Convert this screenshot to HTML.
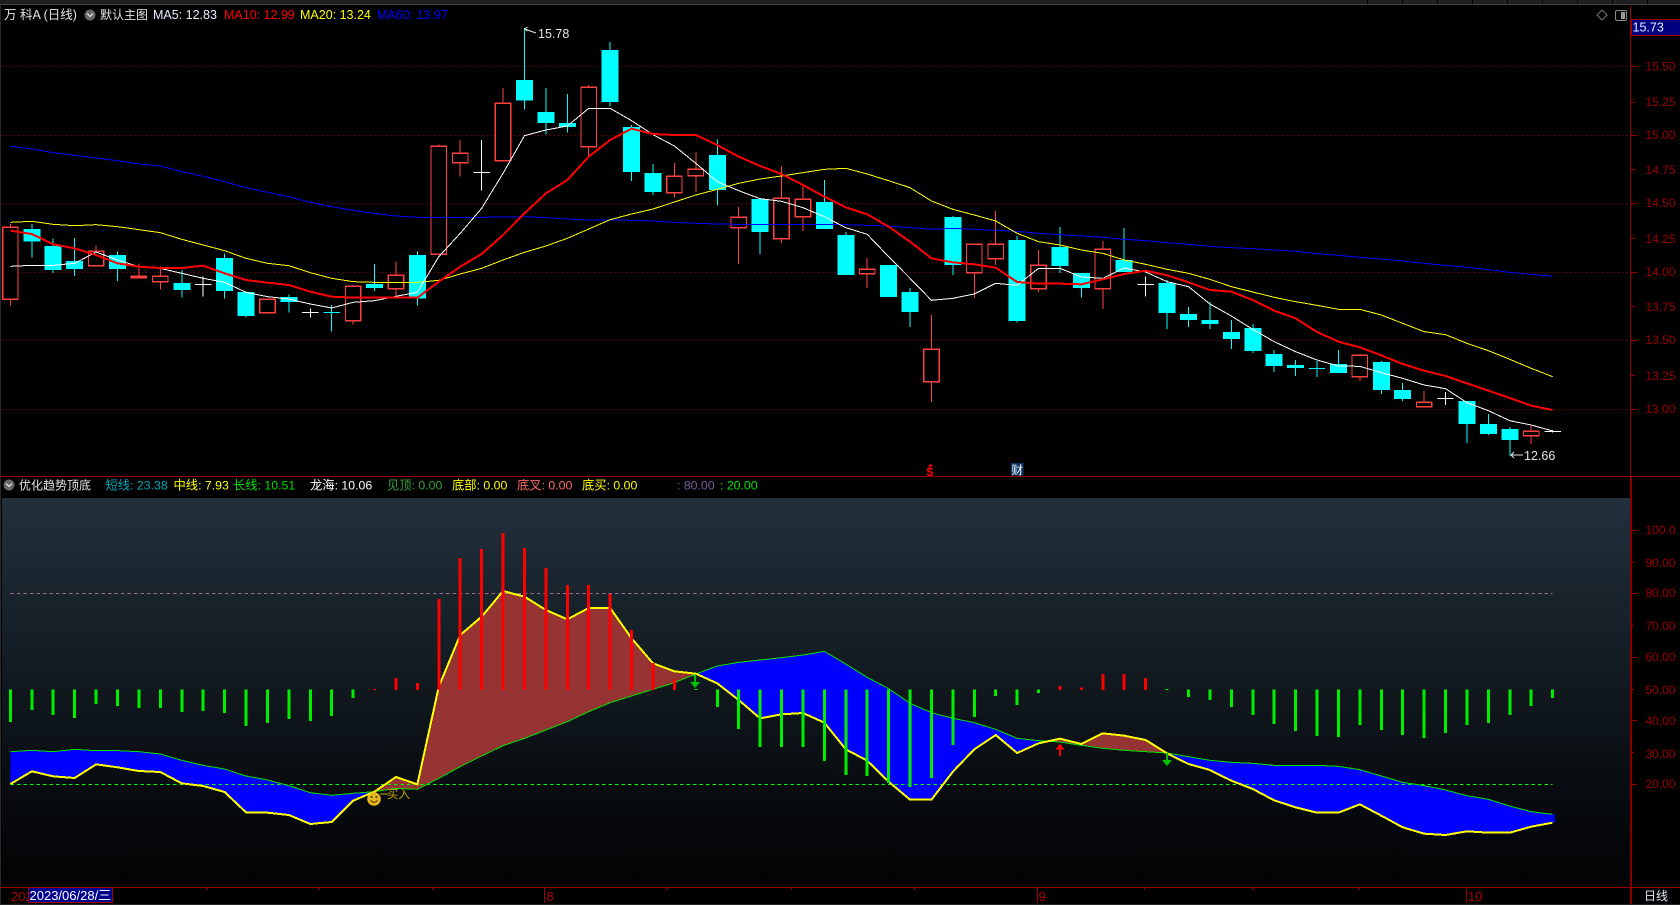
<!DOCTYPE html>
<html lang="zh">
<head>
<meta charset="utf-8">
<title>万科A 日线</title>
<style>
html,body{margin:0;padding:0;background:#000;width:1680px;height:905px;overflow:hidden}
svg{display:block;position:absolute;left:0;top:0}
text{font-family:"Liberation Sans","Noto Sans CJK SC",sans-serif;font-size:12.3px;white-space:pre}
.n{vector-effect:non-scaling-stroke;fill:none}
.ax text{fill:#9c0000;font-size:12px}
</style>
</head>
<body>
<svg width="1680" height="905" viewBox="0 0 1680 905" xmlns="http://www.w3.org/2000/svg">
<defs>
<linearGradient id="bg" x1="0" y1="0" x2="0" y2="1">
<stop offset="0" stop-color="#22303c"/>
<stop offset=".25" stop-color="#19242d"/>
<stop offset=".5" stop-color="#10181e"/>
<stop offset=".75" stop-color="#080c10"/>
<stop offset="1" stop-color="#010203"/>
</linearGradient>
</defs>
<rect width="1680" height="905" fill="#000"/>
<!-- top strip -->
<rect x="0" y="0" width="1680" height="4" fill="#1f1f1f"/>
<rect x="0" y="4" width="1680" height="1" fill="#444"/>
<path d="M1367.5 0V4M1402.5 0V4M1437.5 0V4M1472.5 0V4M1507.5 0V4M1542.5 0V4M1577.5 0V4M1612.5 0V4M1647.5 0V4" stroke="#000" fill="none"/>
<rect x="0" y="5" width="1" height="900" fill="#2a2a2a"/>

<!-- grid -->
<g stroke="#8c0000" stroke-dasharray="1 3" fill="none">
<path d="M2 66.5H1630M2 135.5H1630M2 203.5H1630M2 272.5H1630M2 340.5H1630M2 409.5H1630"/>
</g>

<!-- candles -->
<g transform="translate(10.4 0) scale(21.42 .33333)" shape-rendering="crispEdges">
<path class="n" stroke="#ff4040" stroke-width="1" d="M0 672V917M4 736V797M6 790V836M7 800V869M12 895V938M16 855V974M18 784V888M20 433V765M21 420V530M23 264V482M27 255V470M31 489V593M32 456V576M34 621V792M36 498V729M37 560V693M40 774V864M43 945V1206M45 733V893M46 633V795M48 750V876M51 723V927M63 1062V1143M66 1173V1220M71 1278V1332"/>
<path class="n" style="fill:#000" stroke="#ff4040" stroke-width="1.2" d="M-.36 682h.72v216h-.72zM3.64 754h.72v43h-.72zM5.64 829h.72v4h-.72zM6.64 829h.72v16h-.72zM11.64 898h.72v40h-.72zM15.64 859h.72v103h-.72zM17.64 826h.72v40h-.72zM19.64 439h.72v324h-.72zM20.64 460h.72v28h-.72zM22.64 310h.72v172h-.72zM26.64 262h.72v178h-.72zM30.64 529h.72v49h-.72zM31.64 508h.72v19h-.72zM33.64 652h.72v31h-.72zM35.64 595h.72v121h-.72zM36.64 598h.72v52h-.72zM39.64 808h.72v13h-.72zM42.64 1048h.72v97h-.72zM44.64 733h.72v85h-.72zM45.64 733h.72v43h-.72zM47.64 796h.72v70h-.72zM50.64 748h.72v118h-.72zM62.64 1066h.72v64h-.72zM65.64 1207h.72v13h-.72zM70.64 1294h.72v13h-.72z"/>
<path class="n" stroke="#00ffff" stroke-width="1" d="M1 672V773M2 715V819M3 714V828M5 754V843M8 810V893M10 760V896M11 875V953M13 883V938M15 915V995M17 792V873M19 754V917M24 84V329M25 264V403M26 282V398M28 126V320M29 375V543M30 492V585M33 418V617M35 597V762M38 540V687M39 696V825M42 864V981M44 648V825M47 708V968M49 681V819M50 819V893M52 684V816M54 840V987M55 921V981M56 906V987M57 960V1047M58 972V1059M59 1050V1116M60 1080V1128M61 1083V1131M62 1050V1119M64 1083V1182M65 1149V1203M68 1203V1329M69 1242V1305M70 1281V1368"/>
<path class="n" stroke="#00ffff" stroke-width="17" d="M1 687V725M2 738V810M3 783V807M5 765V807M8 849V870M10 774V873M11 876V948M13 891V906M17 852V864M19 765V896M24 240V302M25 336V369M26 369V381M28 150V306M29 381V516M30 519V576M33 465V570M35 597V696M38 606V687M39 705V825M41 795V891M42 876V936M44 651V795M47 720V963M49 741V798M50 819V864M52 780V816M54 849V939M55 942V960M56 960V972M57 996V1017M58 984V1053M59 1062V1098M60 1095V1104M62 1092V1119M64 1086V1170M65 1170V1197M68 1203V1272M69 1272V1302M70 1287V1320"/>
<path class="n" stroke="#00ffff" stroke-width="1" d="M14.62 937H15.38M60.62 1105H61.38"/>
<path class="n" stroke="#ffffff" stroke-width="1" d="M9 829V890M14 926V953M22 420V572M53 829V890M67 1176V1215M72 1290V1298M8.62 853H9.38M13.62 937H14.38M21.62 517H22.38M52.62 854H53.38M66.62 1195H67.38M71.62 1294H72.38"/>
</g>

<!-- MA lines -->
<g transform="translate(10.4 0) scale(21.42 .33333)" shape-rendering="crispEdges">
<polyline class="n" stroke="#0000ff" stroke-width="1" points="0,439 1,447 2,458 3,466 4,474 5,482 6,492 7,498 8,515 9,529 10,545 11,563 12,577 13,590 14,607 15,620 16,631 17,640 18,648 19,652 20,652 21,652 22,652 23,651 24,650 25,653 26,657 27,660 28,660 29,661 30,663 31,667 32,670 33,672 34,673 35,674 36,674 37,674 38,674 39,674 40,676 41,678 42,683 43,688 44,685 45,688 46,691 47,694 48,700 49,704 50,708 51,712 52,718 53,722 54,728 55,733 56,739 57,743 58,746 59,750 60,754 61,761 62,766 63,772 64,777 65,783 66,790 67,796 68,802 69,809 70,817 71,823 72,829"/>
<polyline class="n" stroke="#ffff00" stroke-width="1" points="0,667 1,664 2,673 3,677 4,674 5,680 6,689 7,698 8,718 9,735 10,752 11,775 12,790 13,797 14,818 15,835 16,845 17,847 18,847 19,847 20,841 21,822 22,805 23,780 24,757 25,738 26,715 27,687 28,659 29,642 30,627 31,606 32,585 33,568 34,550 35,537 36,528 37,518 38,508 39,505 40,522 41,542 42,563 43,603 44,628 45,645 46,663 47,700 48,725 49,735 50,750 51,760 52,780 53,793 54,808 55,820 56,838 57,860 58,876 59,892 60,905 61,916 62,928 63,928 64,945 65,970 66,995 67,1004 68,1030 69,1052 70,1078 71,1105 72,1130"/>
<polyline class="n" stroke="#ffffff" stroke-width="1" points="0,799 1,796 2,796 3,790 4,756 5,780 6,800 7,805 8,820 9,835 10,847 11,877 12,890 13,897 14,912 15,924 16,907 17,902 18,889 19,877 20,770 21,700 22,625 23,520 24,407 25,390 26,378 27,325 28,325 29,362 30,404 31,438 32,490 33,545 34,572 35,596 36,604 37,623 38,650 39,683 40,703 41,770 42,835 43,901 44,895 45,882 46,850 47,856 48,805 49,805 50,831 51,835 52,804 53,816 54,845 55,860 56,912 57,948 58,988 59,1025 60,1055 61,1080 62,1098 63,1099 64,1118 65,1135 66,1155 67,1166 68,1208 69,1232 70,1262 71,1275 72,1293"/>
<polyline class="n" stroke="#ff0000" stroke-width="2" points="0,692 1,702 2,733 3,745 4,765 5,790 6,800 7,804 8,804 9,797 10,820 11,840 12,848 13,855 14,875 15,890 16,893 17,893 18,893 19,893 20,845 21,800 22,762 23,705 24,640 25,580 26,540 27,470 28,420 29,386 30,402 31,405 32,405 33,435 34,470 35,498 36,522 37,555 38,590 39,622 40,643 41,680 42,725 43,775 44,787 45,793 46,803 47,846 48,851 49,851 50,853 51,838 52,822 53,812 54,826 55,847 56,870 57,875 58,900 59,932 60,955 61,996 62,1025 63,1042 64,1066 65,1092 66,1112 67,1128 68,1150 69,1172 70,1194 71,1217 72,1230"/>
</g>

<!-- price labels on chart -->
<path d="M524.5 29L536 33M524.5 29l3 -2M524.5 29l3 2" stroke="#e8e8e8" fill="none"/>
<text x="538" y="38" fill="#e6e6e6" style="font-size:12.5px">15.78</text>
<path d="M1511 455H1523M1511 455l3 -3M1511 455l3 3" stroke="#e8e8e8" fill="none"/>
<text x="1524" y="460" fill="#dfe6ee" style="font-size:12.5px">12.66</text>

<!-- legend -->
<text x="4" y="19" fill="#e4e4e4" style="font-size:12.5px">万 科A (日线)</text>
<circle cx="90" cy="15" r="5.5" fill="#666"/>
<path d="M87 13.5l3 3 3-3" stroke="#ddd" stroke-width="1.3" fill="none"/>
<text x="100" y="19" fill="#e4e4e4" style="font-size:12px">默认主图</text>
<text x="153" y="19" fill="#e8f0ff" style="font-size:12.5px">MA5: 12.83</text>
<text x="224" y="19" fill="#ff0000" style="font-size:12.5px">MA10: 12.99</text>
<text x="300" y="19" fill="#ffff00" style="font-size:12.5px">MA20: 13.24</text>
<text x="377" y="19" fill="#0000ff" style="font-size:12.5px">MA60: 13.97</text>

<!-- top right icons -->
<path d="M1602 10l5 5-5 5-5-5z" stroke="#777" fill="none"/>
<rect x="1615.5" y="10.5" width="11" height="10" rx="1.5" stroke="#888" fill="none"/>
<rect x="1621" y="12" width="4" height="7" fill="#999"/>

<!-- markers above the divider -->
<path d="M930.5 463.5l-2.5 3h5z" fill="#ff0000"/>
<text x="926.5" y="476" fill="#ff0000" style="font-size:12px;font-weight:bold">$</text>
<rect x="1011" y="463" width="12.5" height="12.5" fill="#0d3a68"/>
<text x="1011.5" y="474" fill="#ffffff" style="font-size:11.5px">财</text>

<!-- sub panel background -->
<rect x="2" y="498" width="1628" height="389" fill="url(#bg)"/>

<!-- dividers and axis -->
<rect x="0" y="476" width="1680" height="1" fill="#960000"/>
<rect x="0" y="887" width="1680" height="1" fill="#960000"/>
<rect x="1630" y="6" width="1" height="470" fill="#960000"/>
<rect x="1630" y="477" width="2" height="428" fill="#860000"/>

<!-- sub legend -->
<circle cx="9" cy="485" r="5.5" fill="#666"/>
<path d="M6 483.5l3 3 3-3" stroke="#ddd" stroke-width="1.3" fill="none"/>
<text x="19" y="489.5" fill="#e4e4e4" style="font-size:12px">优化趋势顶底</text>
<text x="105.5" y="489.5" fill="#00a8b8">短线: 23.38</text>
<text x="173.5" y="489.5" fill="#ffff00">中线: 7.93</text>
<text x="233" y="489.5" fill="#00e000">长线: 10.51</text>
<text x="310" y="489.5" fill="#ffffff">龙海: 10.06</text>
<text x="387" y="489.5" fill="#3aa03a">见顶: 0.00</text>
<text x="452" y="489.5" fill="#ffff00">底部: 0.00</text>
<text x="517" y="489.5" fill="#ff6a6a">底叉: 0.00</text>
<text x="582" y="489.5" fill="#ffff00">底买: 0.00</text>
<text x="677" y="489.5" fill="#7d5c96">: 80.00</text>
<text x="720" y="489.5" fill="#00e000">: 20.00</text>

<!-- sub indicator -->
<g transform="translate(10.4 470) scale(21.42 .33333)">
<path d="M0 845L1 841 2 845 3 838 4 842 5 842 6 845 7 852 8 871 9 886 10 897 11 918 12 930 13 947 14 968 15 976 16 970 17 965 16 992 15 1056 14 1062 13 1035 12 1028 11 1027 10 966 9 948 8 940 7 906 6 903 5 892 4 883 3 924 2 919 1 904 0 942Z" fill="#0000ff"/>
<path d="M17 965L18 921 19 943 20 650 21 495 22 440 23 363 24 380 25 420 26 448 27 414 28 414 29 505 30 580 31 604 32 611 31 638 30 658 29 678 28 698 27 725 26 755 25 780 24 805 23 827 22 858 21 890 20 925 19 958 18 955Z" fill="#963333"/>
<path d="M32 611L33 588 34 577 35 570 36 563 37 555 38 544 39 582 40 622 41 656 42 700 43 728 44 745 45 758 46 778 47 805 48 812 48.44 814 48 820 47 849 46 795 45 838 44 905 43 989 42 989 41 935 40 872 39 838 38 758 37 729 36 733 35 745 34 690 33 640Z" fill="#0000ff"/>
<path d="M48.44 814L49 806 50 822 51 790 52 797 53 810 54 850 53 845 52 841 51 835 50 826 49 816Z" fill="#963333"/>
<path d="M54 849.5L55 860 56 871 57 877 58 880 59 886 60 886 61 886 62 889 63 899 64 918 65 937 66 947 67 960 68 977 69 988 70 1008 71 1025 72 1033 72.1 1033 72.1 1058 72 1058 71 1070 70 1088 69 1088 68 1084 67 1095 66 1091 65 1072 64 1037 63 1003 62 1028 61 1028 60 1012 59 991 58 957 57 932 56 900 55 882Z" fill="#0000ff"/>
<path class="n" stroke="#a06c8c" stroke-width="1" stroke-dasharray="3.5 3" d="M0 370H72" shape-rendering="crispEdges"/>
<path class="n" stroke="#00ff00" stroke-width="1" stroke-dasharray="3.5 3" d="M0 943H72" shape-rendering="crispEdges"/>
<g shape-rendering="crispEdges">
<polyline class="n" stroke="#00e000" stroke-width="1" points="0,845 1,841 2,845 3,838 4,842 5,842 6,845 7,852 8,871 9,886 10,897 11,918 12,930 13,947 14,968 15,976 16,970 17,965 18,955 19,958 20,925 21,890 22,858 23,827 24,805 25,780 26,755 27,725 28,698 29,678 30,658 31,638 32,612 33,588 34,577 35,570 36,563 37,555 38,544 39,582 40,622 41,656 42,700 43,728 44,745 45,758 46,778 47,805 48,812 49,816 50,826 51,835 52,841 53,845 54,849 55,860 56,871 57,877 58,880 59,886 60,886 61,886 62,889 63,899 64,918 65,937 66,947 67,960 68,977 69,988 70,1008 71,1025 72,1033"/>
<polyline class="n" stroke="#ffff00" stroke-width="2" points="0,942 1,904 2,919 3,924 4,883 5,892 6,903 7,906 8,940 9,948 10,966 11,1027 12,1028 13,1035 14,1062 15,1056 16,992 17,965 18,921 19,943 20,650 21,495 22,440 23,363 24,380 25,420 26,448 27,414 28,414 29,505 30,580 31,604 32,611 33,640 34,690 35,745 36,733 37,729 38,758 39,838 40,872 41,935 42,989 43,989 44,905 45,838 46,795 47,849 48,820 49,806 50,822 51,790 52,797 53,810 54,850 55,882 56,900 57,932 58,957 59,991 60,1012 61,1028 62,1028 63,1003 64,1037 65,1072 66,1091 67,1095 68,1084 69,1088 70,1088 71,1070 72,1058"/>
<path class="n" stroke="#00ee00" stroke-width="3" d="M0 658V756M1 658V720M2 658V735M3 658V744M4 658V702M5 658V708M6 658V714M7 658V714M8 658V726M9 658V723M10 658V729M11 658V768M12 658V759M13 658V747M14 658V753M15 658V738M16 658V684M32 657V660M33 658V711M34 658V777M35 658V831M36 658V831M37 658V831M38 658V873M39 658V915M40 658V918M41 658V939M42 658V951M43 658V924M44 658V825M45 658V741M46 658V678M47 658V705M48 658V669M54 657V660M55 658V681M56 658V690M57 658V711M58 658V735M59 658V762M60 658V783M61 658V798M62 658V801M63 658V765M64 658V780M65 658V795M66 658V804M67 658V789M68 658V765M69 658V759M70 658V735M71 658V708M72 658V684"/>
<path class="n" stroke="#ff0000" stroke-width="3" d="M17 657V660M18 624V660M19 639V660M20 387V660M21 264V660M22 237V660M23 189V660M24 234V660M25 294V660M26 345V660M27 345V660M28 372V660M29 480V660M30 579V660M31 628V660M49 648V660M50 652V660M51 612V660M52 612V660M53 624V660"/>
</g>
</g>

<!-- signals -->
<path d="M695 675V683" stroke="#00c000" stroke-width="2" fill="none"/>
<path d="M690 682h10l-5 6z" fill="#00c000"/>
<path d="M1060 749V756" stroke="#ff0000" stroke-width="2" fill="none"/>
<path d="M1060 743.5l4.5 6h-9z" fill="#ff0000"/>
<path d="M1167 753V761" stroke="#00c000" stroke-width="2" fill="none"/>
<path d="M1162 760h10l-5 6z" fill="#00c000"/>
<circle cx="374" cy="799" r="6.8" fill="#e6b61e"/>
<circle cx="371.6" cy="797" r="1" fill="#4a3500"/>
<circle cx="376.4" cy="797" r="1" fill="#4a3500"/>
<path d="M370.5 800.5q3.5 3.5 7 0" stroke="#4a3500" fill="none"/>
<path d="M380 794H388" stroke="#c8a800" fill="none"/>
<text x="387" y="798" fill="#c8a800" style="font-size:11.5px">买入</text>

<!-- axis labels -->
<g class="ax">
<path d="M1631 66.5H1637M1631 102.5H1635M1631 135.5H1637M1631 169.5H1635M1631 203.5H1637M1631 238.5H1635M1631 272.5H1637M1631 306.5H1635M1631 340.5H1637M1631 375.5H1635M1631 409.5H1637" stroke="#960000" fill="none"/>
<text x="1645.5" y="70.5">15.50</text>
<text x="1645.5" y="106">15.25</text>
<text x="1645.5" y="139">15.00</text>
<text x="1645.5" y="174">14.75</text>
<text x="1645.5" y="207">14.50</text>
<text x="1645.5" y="243">14.25</text>
<text x="1645.5" y="276">14.00</text>
<text x="1645.5" y="311">13.75</text>
<text x="1645.5" y="344">13.50</text>
<text x="1645.5" y="380">13.25</text>
<text x="1645.5" y="413">13.00</text>
<path d="M1632 530.5H1637M1632 562.5H1634M1632 593.5H1637M1632 625.5H1634M1632 657.5H1637M1632 689.5H1634M1632 720.5H1637M1632 752.5H1634M1632 784.5H1637" stroke="#960000" fill="none"/>
<text x="1645.5" y="534">100.0</text>
<text x="1645.5" y="567">90.00</text>
<text x="1645.5" y="597">80.00</text>
<text x="1645.5" y="630">70.00</text>
<text x="1645.5" y="661">60.00</text>
<text x="1645.5" y="694">50.00</text>
<text x="1645.5" y="725">40.00</text>
<text x="1645.5" y="758">30.00</text>
<text x="1645.5" y="788">20.00</text>
</g>

<!-- current price box -->
<rect x="1631.5" y="19.5" width="49" height="16" fill="#000080" stroke="#a00000"/>
<text x="1632.5" y="31.5" fill="#e8f0ff" style="font-size:12.5px">15.73</text>

<!-- bottom axis -->
<g fill="#b00000">
<text x="11" y="901" style="font-size:13px">202</text>
<text x="546.5" y="901" style="font-size:13px">8</text>
<text x="1038.5" y="901" style="font-size:13px">9</text>
<text x="1468" y="901" style="font-size:13px">10</text>
</g>
<path d="M544.5 888V903M1037.5 888V903M1466.5 888V903M207.5 888V890M319.5 888V890M432.5 888V890M667.5 888V890M791.5 888V890M914.5 888V890M1144.5 888V890M1252.5 888V890M1359.5 888V890" stroke="#960000" fill="none"/>
<rect x="28.5" y="887.5" width="84" height="15" fill="#000090" stroke="#a00000"/>
<text x="29.5" y="900" fill="#ffffff" style="font-size:13px">2023/06/28/三</text>
<text x="1644" y="900" fill="#dfe8f5" style="font-size:12px">日线</text>
<rect x="0" y="904" width="1680" height="1" fill="#262626"/>
</svg>
</body>
</html>
